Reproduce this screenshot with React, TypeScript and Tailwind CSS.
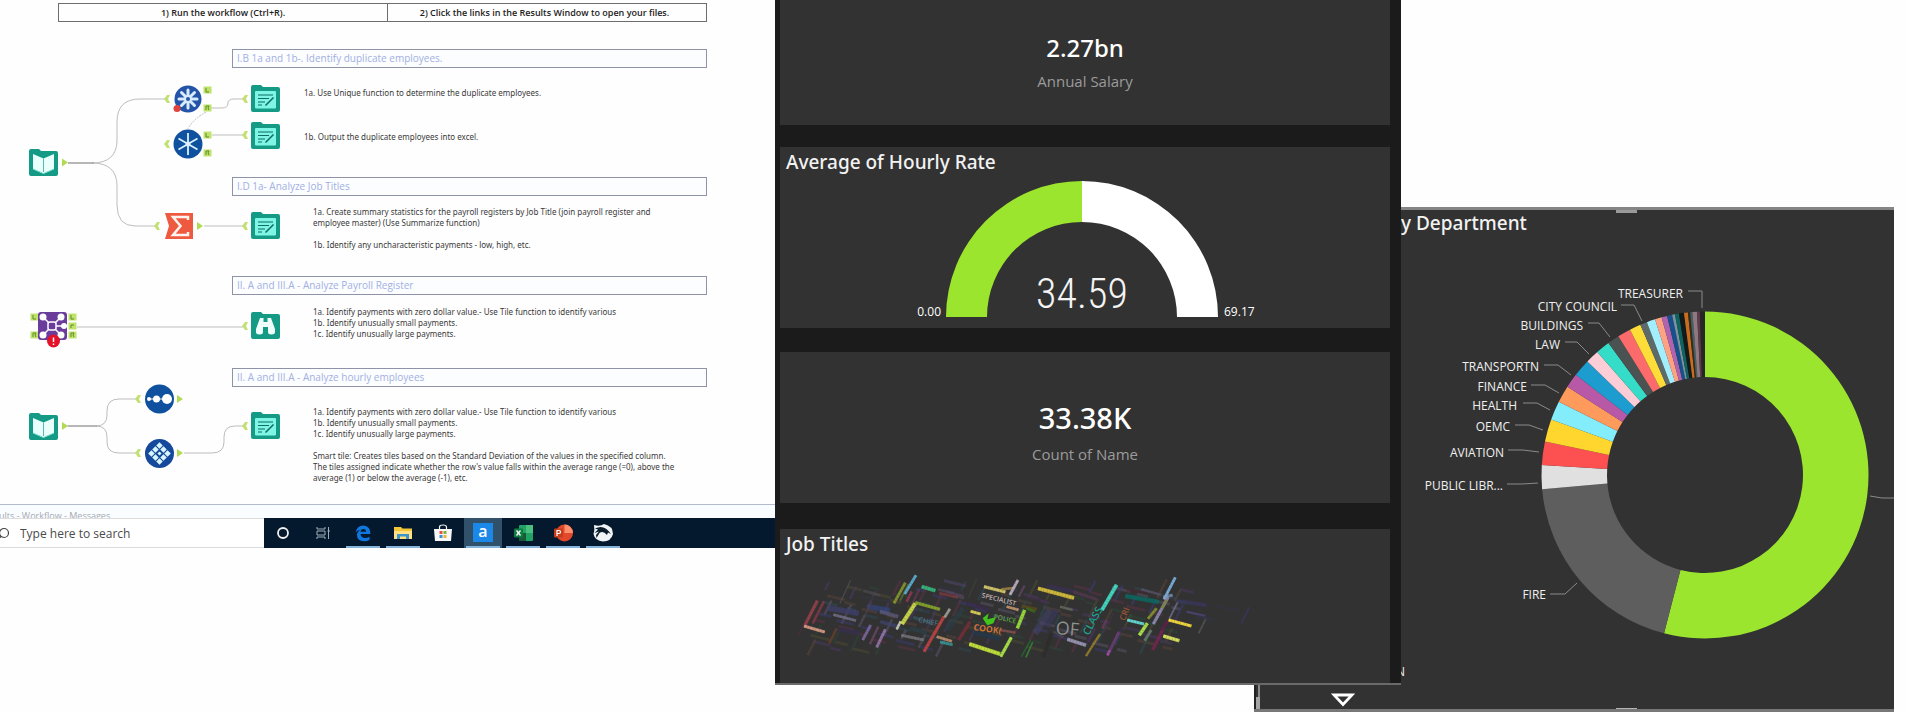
import React from "react";

const textFont = "font-['Open_Sans','Noto_Sans',sans-serif]";

/* ---------- Workflow canvas ---------- */

const TEAL = "#159a86";

function Folder({ x, y, children }: { x: number; y: number; children: React.ReactNode }) {
  return (
    <g transform={`translate(${x} ${y})`}>
      <path d="M0 2Q0 0 2 0H10L12 2H27Q29 2 29 4V25Q29 27 27 27H2Q0 27 0 25Z" fill={TEAL} />
      {children}
    </g>
  );
}

function Book({ x, y }: { x: number; y: number }) {
  return (
    <Folder x={x} y={y}>
      <path d="M4 5L14.500 9.500L25 5V20L14.500 24.500L4 20Z" fill="#e9fffb" />
      <path d="M14.500 9.500V23" stroke="#5fb5a9" strokeWidth="1" />
      <path d="M4 20L14.500 24.500L25 20" stroke="#7fe0d2" strokeWidth="1" fill="none" />
    </Folder>
  );
}

function Output({ x, y }: { x: number; y: number }) {
  return (
    <Folder x={x} y={y}>
      <rect x="4" y="6" width="21" height="17.500" rx="1" fill="#7ff5e6" />
      <path d="M7 10H22M7 13.500H18M7 17H14M7 20H11" stroke="#0f6d62" strokeWidth="1.200" />
      <path d="M14.500 20.500L22.500 12.500" stroke="#0f6d62" strokeWidth="1.600" />
    </Folder>
  );
}

function Browse({ x, y }: { x: number; y: number }) {
  return (
    <Folder x={x} y={y}>
      <path
        d="M9 6H12.500V10H16.500V6H20L24 17V20Q24 22.500 20.500 22.500Q17 22.500 17 20V15H12V20Q12 22.500 8.500 22.500Q5 22.500 5 20V17Z"
        fill="#effffc"
      />
    </Folder>
  );
}

function Port({ x, y, t }: { x: number; y: number; t?: string }) {
  return (
    <g>
      <rect x={x - 3.5} y={y - 3.5} width="8" height="7" fill="#bfe26a" />
      {t && <path d={t} transform={`translate(${x} ${y})`} stroke="#5f8a2c" strokeWidth="1" fill="none" />}
    </g>
  );
}

const InPort = ({ x, y }: { x: number; y: number }) => (
  <path d={`M${x + 2} ${y - 4}H${x - 1}L${x - 4} ${y}L${x - 1} ${y + 4}H${x + 2}L${x} ${y}Z`} fill="#c3e173" />
);
const OutPort = ({ x, y }: { x: number; y: number }) => (
  <path d={`M${x - 2} ${y - 4}L${x + 4} ${y}L${x - 2} ${y + 4}Z`} fill="#b0dc55" />
);

function Workflow() {
  return (
    <svg className="absolute left-0 top-0" width="775" height="470" viewBox="0 34 775 470" aria-hidden="true">
      <g fill="none" stroke="#bdbdbd" strokeWidth="1">
        <path d="M68 163H92Q117 163 117 140V122Q117 99 140 99H165" />
        <path d="M92 163Q117 163 117 186V205Q117 226 135 226H155" />
        <path d="M68 163H94" stroke="#909090" />
        <path d="M211 108H222Q228 108 228 103Q228 99 234 99H243" />
        <path d="M206 112Q192 120 188 129" strokeDasharray="2 1" />
        <path d="M212 135H243M204 226H243M77 327H243" />
        <path d="M67 426H96Q107 426 107 415V411Q107 399 119 399H137" />
        <path d="M96 426Q107 426 107 437V442Q107 453 119 453H137" />
        <path d="M68 426H97" stroke="#909090" />
        <path d="M184 453H212Q224 453 224 442V437Q224 426 235 426H243" />
      </g>

      <Book x={29} y={149} />
      <OutPort x={64} y={162.5} />

      <circle cx="188" cy="99" r="13.500" fill="#2454a8" />
      <g stroke="#d9ebff" strokeWidth="3" strokeLinecap="round">
        <path d="M188 90V108M179 99H197M181.500 92.500L194.500 105.500M194.500 92.500L181.500 105.500" />
      </g>
      <circle cx="188" cy="99" r="2" fill="#2454a8" />
      <circle cx="177" cy="108.500" r="3.500" fill="#e0443c" />
      <InPort x={168} y={99} />
      <Port x={207} y={90} t="M-1 -2V2H2" />
      <Port x={207} y={108} t="M-1 2V-2H2L1 0L2 2" />

      <circle cx="188" cy="144" r="14.500" fill="#0f519e" />
      <path d="M188 133V155M178.500 138.500L197.500 149.500M197.500 138.500L178.500 149.500" stroke="#d9f1ff" strokeWidth="1.800" />
      <circle cx="188" cy="144" r="2.500" fill="#d9f1ff" />
      <InPort x={168} y={144} />
      <Port x={207} y={135} t="M-1 -2V2H2" />
      <Port x={207} y={153} t="M-1 2V-2H2L1 0L2 2" />

      <InPort x={246} y={99} />
      <Output x={251} y={85} />
      <InPort x={246} y={135} />
      <Output x={251} y={122} />

      <InPort x={158} y={226} />
      <path d="M165 213H193V239H165L169 226Z" fill="#ee5a40" />
      <path d="M188 220V217H173L180.500 226L173 235H188V232" fill="none" stroke="#fff3ef" strokeWidth="2.500" />
      <OutPort x={199} y={226} />
      <InPort x={246} y={226} />
      <Output x={251} y={212} />

      <Port x={34} y={317} t="M-1 -2V2H2" />
      <Port x={34} y={335} t="M-1 2V-2H2L1 0L2 2" />
      <Port x={72} y={317} t="M-1 -2V2H2" />
      <Port x={72} y={326} t="M-1 2V-1H2" />
      <Port x={72} y={335} t="M-1 2V-2H2L1 0L2 2" />
      <rect x="38" y="312" width="29" height="28" rx="3" fill="#6a3d9c" />
      <path d="M43 317L61 335M61 317L43 335M52 326H65" stroke="#ffffff" strokeWidth="1.500" />
      <g fill="#ffffff">
        <circle cx="43" cy="317" r="3.500" />
        <circle cx="61" cy="317" r="3.500" />
        <circle cx="43" cy="335" r="3.500" />
        <circle cx="61" cy="335" r="3.500" />
        <circle cx="64" cy="326" r="3" />
      </g>
      <rect x="48" y="322" width="8" height="8" rx="2" fill="#6a3d9c" stroke="#ffffff" strokeWidth="1.500" />
      <circle cx="53.500" cy="341" r="6.500" fill="#e5122a" />
      <path d="M53.500 337.500V342M53.500 343.500V345" stroke="#ffffff" strokeWidth="1.500" />
      <InPort x={246} y={326} />
      <Browse x={251} y={312} />

      <Book x={29} y={413} />
      <OutPort x={64} y={426} />
      <InPort x={139} y={399} />
      <circle cx="159.500" cy="399" r="14.500" fill="#0f519e" />
      <path d="M148 399H168" stroke="#ffffff" strokeWidth="1" />
      <circle cx="149" cy="399" r="2" fill="#ffffff" />
      <circle cx="156.500" cy="399" r="3.500" fill="#ffffff" />
      <circle cx="167" cy="399" r="5" fill="#ffffff" />
      <OutPort x={179} y={399} />
      <InPort x={139} y={453} />
      <circle cx="159.500" cy="453.500" r="14.500" fill="#15499b" />
      <g transform="translate(159.500 453.500) rotate(45)" fill="#d8f6ff">
        <rect x="-8" y="-8" width="4.600" height="4.600" />
        <rect x="-2.300" y="-8" width="4.600" height="4.600" />
        <rect x="3.400" y="-8" width="4.600" height="4.600" />
        <rect x="-8" y="-2.300" width="4.600" height="4.600" />
        <rect x="-1.500" y="-1.500" width="3" height="3" />
        <rect x="3.400" y="-2.300" width="4.600" height="4.600" />
        <rect x="-8" y="3.400" width="4.600" height="4.600" />
        <rect x="-2.300" y="3.400" width="4.600" height="4.600" />
        <rect x="3.400" y="3.400" width="4.600" height="4.600" />
      </g>
      <OutPort x={179} y={453} />
      <InPort x={246} y={426} />
      <Output x={251} y={412} />
    </svg>
  );
}

const headingStyle =
  "absolute left-[232px] w-[475px] h-[19px] border border-[#8f93a8] bg-[#fbfdff] pl-1 text-[10px] leading-[17px] text-[#a3b0e2] whitespace-nowrap";
const noteStyle =
  "absolute font-['Noto_Sans','Open_Sans',sans-serif] text-[8px] leading-[11px] text-[#3a3a3a] whitespace-nowrap";

function Canvas() {
  return (
    <div className="relative h-[470px] overflow-hidden">
      <Workflow />
      <h2 className={`${headingStyle} top-[15px]`}>I.B 1a and 1b-. Identify duplicate employees.</h2>
      <p className={`${noteStyle} left-[304px] top-[53px]`}>1a. Use Unique function to determine the duplicate employees.</p>
      <p className={`${noteStyle} left-[304px] top-[97px]`}>1b. Output the duplicate employees into excel.</p>

      <h2 className={`${headingStyle} top-[143px]`}>I.D 1a- Analyze Job Titles</h2>
      <div className={`${noteStyle} left-[313px] top-[172px]`}>
        <p>1a. Create summary statistics for the payroll registers by Job Title (join payroll register and</p>
        <p>employee master) (Use Summarize function)</p>
        <p className="mt-[11px]">1b. Identify any uncharacteristic payments - low, high, etc.</p>
      </div>

      <h2 className={`${headingStyle} top-[242px]`}>II. A and III.A - Analyze Payroll Register</h2>
      <div className={`${noteStyle} left-[313px] top-[272px]`}>
        <p>1a. Identify payments with zero dollar value.- Use Tile function to identify various</p>
        <p>1b. Identify unusually small payments.</p>
        <p>1c. Identify unusually large payments.</p>
      </div>

      <h2 className={`${headingStyle} top-[334px]`}>II. A and III.A - Analyze hourly employees</h2>
      <div className={`${noteStyle} left-[313px] top-[372px]`}>
        <p>1a. Identify payments with zero dollar value.- Use Tile function to identify various</p>
        <p>1b. Identify unusually small payments.</p>
        <p>1c. Identify unusually large payments.</p>
        <p className="mt-[11px]">Smart tile: Creates tiles based on the Standard Deviation of the values in the specified column.</p>
        <p>The tiles assigned indicate whether the row's value falls within the average range (=0), above the</p>
        <p>average (1) or below the average (-1), etc.</p>
      </div>
    </div>
  );
}

function TaskButton({ label, open, active, children }: { label: string; open?: boolean; active?: boolean; children: React.ReactNode }) {
  return (
    <button
      aria-label={label}
      className={`relative flex h-[30px] w-[38px] items-center justify-center ${active ? "bg-[#31506a]" : ""}`}
    >
      <svg width="22" height="22" viewBox="0 0 22 22">
        {children}
      </svg>
      {open && <span className="absolute inset-x-[2px] bottom-0 h-[2px] bg-[#84b4dc]" />}
    </button>
  );
}

function Taskbar() {
  return (
    <div className="flex h-[30px] bg-[#04192d]">
      <label className="flex w-[264px] items-center gap-[11px] overflow-hidden border-y border-[#dcdcdc] bg-white pt-[2px]">
        <svg width="9" height="14" viewBox="0 0 9 14" className="shrink-0" aria-hidden="true">
          <circle cx="4" cy="6" r="4.500" fill="none" stroke="#444" strokeWidth="1.200" />
          <path d="M1 9.500L-2 12.500" stroke="#444" strokeWidth="1.200" />
        </svg>
        <input
          aria-label="Search"
          placeholder="Type here to search"
          className="w-full bg-transparent text-[12px] leading-4 text-[#444] outline-none placeholder:text-[#4a4a4a]"
        />
      </label>
      <div className="flex items-center gap-[2px]">
        <TaskButton label="Cortana">
          <circle cx="11" cy="11" r="5" fill="none" stroke="#f1f1f1" strokeWidth="1.800" />
        </TaskButton>
        <TaskButton label="Task view">
          <path d="M5 5V7H13V5M5 17V15H13V17M5 9H13V13H5ZM16.500 5V17M15.500 9H18" fill="none" stroke="#9fb0bb" strokeWidth="1" />
        </TaskButton>
        <TaskButton label="Edge" open>
          <path
            d="M3.500 10.500Q5 3.500 11.500 3.500Q18.500 4 18.500 12H8.500Q9 16 13 16Q15.500 16 17.500 14.800V18Q15 19.200 12 19.200Q5 19 5 13Q5 9.500 9 7.500Q5.500 8 3.500 10.500ZM8.500 9.800H14Q14 7 11.500 7Q9 7 8.500 9.800Z"
            fill="#0f78e0"
            fillRule="evenodd"
          />
        </TaskButton>
        <TaskButton label="Files" open>
          <path d="M2 5H9L10.500 6.500H20V17H2Z" fill="#f3c63a" />
          <path d="M2 9H20V17H2Z" fill="#ffe082" />
          <path d="M5 12H17V17H14V14.500H8V17H5Z" fill="#3c96c9" />
        </TaskButton>
        <TaskButton label="Store">
          <path d="M7.500 7V5Q7.500 3 11 3Q14.500 3 14.500 5V7" fill="none" stroke="#f4f4f4" strokeWidth="1.200" />
          <path d="M2 7H20L19 19H3Z" fill="#f8f8f8" />
          <rect x="7.500" y="9" width="3" height="3" fill="#e2543c" />
          <rect x="11.500" y="9" width="3" height="3" fill="#7cb342" />
          <rect x="7.500" y="13" width="3" height="3" fill="#3b8fd6" />
          <rect x="11.500" y="13" width="3" height="3" fill="#f2b632" />
        </TaskButton>
        <TaskButton label="Alteryx" open active>
          <rect x="1" y="1" width="20" height="19" fill="#1b87e6" />
          <text x="11" y="15" textAnchor="middle" fontSize="16" fontWeight="600" fill="#ffffff" fontFamily="Open Sans">a</text>
        </TaskButton>
        <TaskButton label="Excel" open>
          <rect x="7" y="3" width="14" height="16" rx="1" fill="#21a366" />
          <path d="M14 3H21V11H14Z" fill="#4bbf7e" />
          <path d="M7 11H14V19H7Z" fill="#185c37" />
          <rect x="2" y="6.500" width="9" height="9" rx="1" fill="#107c41" />
          <path d="M4.500 8.500L8.500 13.500M8.500 8.500L4.500 13.500" stroke="#ffffff" strokeWidth="1.300" />
        </TaskButton>
        <TaskButton label="PowerPoint" open>
          <circle cx="12.500" cy="11" r="8.500" fill="#e2492c" />
          <path d="M12.500 2.500A8.500 8.500 0 0 1 21 11H12.500Z" fill="#ff8f6b" />
          <rect x="2" y="6.500" width="9" height="9" rx="1" fill="#c43e1c" />
          <path d="M5 14V8.500H7Q8.500 8.500 8.500 10Q8.500 11.500 7 11.500H5" fill="none" stroke="#ffffff" strokeWidth="1.200" />
        </TaskButton>
        <TaskButton label="Idea" open>
          <path d="M2 3Q8 5 12 2Q21 4 21 12Q19 19.500 11 19.500Q3 19 1.500 12Q3 8 2 3Z" fill="#f2f5f7" />
          <path d="M3 6.500Q12 1.500 19 12L16 10.500L15 13Q11 8 7.500 11L4.500 16L4 13L7 9.500L2.500 11L6 7.500Z" fill="#0b1c2c" />
        </TaskButton>
      </div>
    </div>
  );
}

function Designer() {
  return (
    <section className="min-w-0 overflow-hidden">
      <div className="mt-[3px] mr-[68px] mb-3 ml-[58px] flex h-[19px] border border-[#6e6e6e] text-center text-[9px] leading-[17px] font-semibold whitespace-nowrap text-[#222]">
        <p className="w-[329px] border-r border-[#6e6e6e]">1) Run the workflow (Ctrl+R).</p>
        <p className="flex-1 pr-[5px]">2) Click the links in the Results Window to open your files.</p>
      </div>
      <Canvas />
      <div className="h-[14px] overflow-hidden border-t border-[#b4bccb] bg-[#fafdff]">
        <p className="mt-[4px] -ml-[1px] text-[9px] leading-[14px] whitespace-nowrap text-[#a5a9b2]">ults - Workflow - Messages</p>
      </div>
      <Taskbar />
    </section>
  );
}

/* ---------- Dashboard column ---------- */

function Gauge() {
  return (
    <svg className="mx-auto block" width="360" height="144" viewBox="905 177 360 144" role="img" aria-label="Average of Hourly Rate">
      <path d="M946 317A136 136 0 0 1 1082 181V222A95 95 0 0 0 987 317Z" fill="#9be52e" />
      <path d="M1082 181A136 136 0 0 1 1218 317H1177A95 95 0 0 0 1082 222Z" fill="#ffffff" />
      <g fill="#ffffff" fontFamily="Open Sans, Noto Sans, sans-serif" fontSize="12" fontWeight="500">
        <text x="941" y="316" textAnchor="end">0.00</text>
        <text x="1224" y="316">69.17</text>
      </g>
      <text
        x="1082"
        y="308"
        textAnchor="middle"
        fontSize="42"
        fontWeight="300"
        fill="#f4f4f4"
        fontFamily="Roboto Condensed, Open Sans Condensed, Roboto, sans-serif"
      >
        34.59
      </text>
    </svg>
  );
}

// [x1, y1, x2, y2, colour, thickness, opacity]
type Stroke = [number, number, number, number, string, number, number];

const strokes: Stroke[] = [
  [180, 130, 212, 60, "#55545c", 4, 0.7],
  [75, 195, 112, 122, "#a8434f", 10, 0.8],
  [98, 190, 132, 124, "#8a3a4a", 8, 0.8],
  [56, 225, 72, 190, "#5c2c48", 5, 0.5],
  [72, 198, 134, 216, "#e0a088", 10, 0.9],
  [144, 144, 236, 160, "#40406e", 18, 0.8],
  [160, 164, 228, 182, "#7a7592", 9, 0.8],
  [148, 250, 170, 205, "#7c442c", 8, 0.6],
  [175, 208, 240, 220, "#36304f", 14, 0.8],
  [250, 92, 300, 106, "#4d4d50", 9, 0.7],
  [240, 110, 330, 125, "#35363c", 10, 0.8],
  [262, 140, 330, 152, "#344a92", 18, 0.6],
  [300, 155, 355, 170, "#646088", 12, 0.7],
  [250, 175, 275, 125, "#54404a", 6, 0.6],
  [248, 240, 272, 195, "#8a70b0", 9, 0.8],
  [270, 252, 295, 200, "#6d4866", 8, 0.8],
  [290, 262, 316, 208, "#9a78ae", 9, 0.9],
  [300, 185, 350, 200, "#42426c", 12, 0.7],
  [342, 130, 376, 68, "#8c9a2e", 9, 0.9],
  [360, 122, 386, 72, "#627034", 6, 0.8],
  [374, 102, 408, 46, "#58a8cc", 9, 1],
  [380, 125, 395, 95, "#b03a5a", 8, 0.7],
  [395, 135, 418, 88, "#6d3a5c", 7, 0.7],
  [425, 80, 466, 92, "#36bd80", 12, 0.9],
  [350, 208, 362, 184, "#d8d8c4", 8, 0.9],
  [366, 192, 406, 130, "#d8e64a", 13, 0.9],
  [406, 128, 480, 148, "#8cab2c", 10, 0.9],
  [404, 146, 450, 158, "#30404c", 12, 0.7],
  [400, 172, 460, 190, "#395b66", 10, 0.7],
  [364, 226, 432, 240, "#7c7c82", 9, 0.8],
  [390, 205, 440, 218, "#2c4148", 14, 0.8],
  [492, 62, 558, 78, "#48425c", 10, 0.8],
  [480, 80, 548, 98, "#34333e", 12, 0.8],
  [478, 100, 534, 112, "#8c3a44", 9, 0.7],
  [500, 95, 550, 108, "#5a4560", 7, 0.7],
  [432, 275, 492, 170, "#bd4444", 10, 0.95],
  [494, 172, 510, 146, "#a4a498", 9, 0.9],
  [470, 230, 516, 244, "#c09070", 9, 0.9],
  [480, 246, 518, 254, "#38a0a0", 9, 0.8],
  [500, 210, 550, 145, "#2c3f48", 16, 0.7],
  [536, 240, 570, 185, "#8a2c3c", 11, 0.7],
  [566, 112, 590, 55, "#3e4434", 5, 0.7],
  [560, 130, 630, 150, "#3c2c50", 12, 0.7],
  [612, 80, 676, 96, "#d5cb6e", 10, 0.95],
  [664, 88, 700, 84, "#b89a3c", 8, 0.7],
  [690, 104, 714, 60, "#c4b8c8", 9, 0.9],
  [716, 110, 734, 76, "#6a4870", 7, 0.7],
  [572, 154, 602, 162, "#e8dc58", 9, 0.9],
  [680, 140, 716, 150, "#c89870", 9, 0.9],
  [580, 218, 660, 236, "#23394c", 15, 0.8],
  [660, 210, 706, 218, "#8c5450", 8, 0.8],
  [568, 252, 660, 282, "#bfe03c", 12, 1],
  [662, 290, 694, 232, "#a6e046", 10, 1],
  [712, 205, 734, 150, "#96d838", 11, 1],
  [725, 138, 770, 148, "#5b4a1c", 11, 0.8],
  [740, 145, 765, 155, "#387018", 9, 0.8],
  [724, 290, 752, 240, "#286c30", 5, 0.8],
  [738, 292, 758, 246, "#369034", 5, 0.8],
  [740, 110, 800, 125, "#463050", 10, 0.5],
  [774, 85, 882, 114, "#d0b83c", 12, 1],
  [800, 78, 880, 94, "#3c305a", 12, 0.7],
  [880, 95, 950, 118, "#603a5a", 10, 0.6],
  [840, 140, 878, 150, "#687060", 8, 0.8],
  [765, 220, 810, 150, "#44446c", 22, 0.6],
  [800, 200, 830, 150, "#39395c", 20, 0.7],
  [790, 290, 815, 220, "#302a2a", 12, 0.7],
  [862, 238, 918, 256, "#a09cb8", 11, 0.9],
  [820, 215, 850, 232, "#4c4c58", 8, 0.7],
  [918, 288, 960, 222, "#9a802c", 7, 0.9],
  [966, 205, 980, 180, "#703e5e", 8, 0.7],
  [982, 286, 1018, 216, "#a450a8", 9, 0.9],
  [966, 150, 1010, 74, "#42d6c0", 12, 1],
  [925, 245, 945, 205, "#513264", 9, 0.7],
  [970, 220, 1000, 160, "#4c304c", 6, 0.6],
  [990, 270, 1030, 200, "#3a314c", 10, 0.6],
  [1036, 108, 1136, 126, "#0b6a62", 14, 0.9],
  [1040, 90, 1100, 98, "#4b2636", 10, 0.5],
  [1084, 88, 1142, 104, "#5a5468", 8, 0.8],
  [1042, 180, 1092, 192, "#62d2cc", 10, 1],
  [1152, 118, 1186, 52, "#78acd4", 9, 1],
  [1120, 192, 1164, 112, "#9290b8", 10, 0.9],
  [1150, 112, 1178, 105, "#8aa0c8", 10, 0.7],
  [1104, 176, 1130, 145, "#8a9430", 9, 0.9],
  [1078, 226, 1102, 190, "#a8e04c", 11, 1],
  [1094, 242, 1114, 210, "#6c8874", 9, 0.8],
  [1118, 270, 1148, 210, "#7c2456", 11, 0.8],
  [1145, 210, 1165, 180, "#6c1c50", 9, 0.8],
  [1146, 145, 1160, 120, "#7c802c", 8, 0.8],
  [1168, 176, 1194, 125, "#747094", 6, 0.8],
  [1166, 180, 1234, 198, "#ecd83c", 10, 1],
  [1150, 228, 1198, 242, "#d8e060", 11, 1],
  [1190, 122, 1280, 136, "#3c3864", 12, 0.7],
  [1220, 155, 1276, 168, "#50487c", 7, 0.8],
  [1256, 220, 1278, 175, "#5c5c60", 6, 0.7],
  [1250, 170, 1300, 178, "#34344c", 10, 0.6],
  [1310, 138, 1380, 152, "#353448", 8, 0.5],
  [1384, 190, 1408, 142, "#3c3860", 7, 0.7],
];

// Small, faint words that fill the gaps between the readable ones.
const fillerColours = ["#4a3a62", "#5c3346", "#2f4a52", "#4d4a34", "#3c3c70", "#58443a", "#2d4638", "#5a5468"];

const fillers: Stroke[] = Array.from({ length: 170 }, (_, i) => {
  const row = i % 10;
  const col = Math.floor(i / 10);
  const x = 135 + col * 66 - row * 7 + ((i * 37) % 23);
  const y = 78 + row * 20 + ((i * 53) % 11);
  const len = 24 + ((i * 29) % 34);
  const colour = fillerColours[(i * 5 + col) % fillerColours.length];
  const steep = (i * 7 + col) % 3 === 0;
  return steep
    ? [x, y + len / 2, x + len * 0.5, y - len / 2, colour, 8, 0.6]
    : [x, y, x + len, y + len * 0.24, colour, 9, 0.55];
});

function WordCloud() {
  return (
    <svg className="block" width="510" height="120" viewBox="0 0 1530 360" role="img" aria-label="Job Titles">
      {[...fillers, ...strokes].map(([x1, y1, x2, y2, colour, w, o], i) => (
        <g key={i} stroke={colour} opacity={o}>
          <path d={`M${x1} ${y1}L${x2} ${y2}`} strokeWidth={w} opacity="0.75" />
          <path d={`M${x1} ${y1}L${x2} ${y2}`} strokeWidth={w * 0.7} strokeDasharray="9 2 6 2" />
        </g>
      ))}
      <path d="M608 175L626 160L622 178L648 172L640 190L622 196Z" fill="#44c41c" />
      <g fontFamily="Open Sans, Noto Sans, sans-serif">
        <text x="604" y="112" fontSize="20" fontWeight="600" fill="#c8b8b8" transform="rotate(14 604 112)">SPECIALIST</text>
        <text x="640" y="176" fontSize="20" fontWeight="600" fill="#5aa838" transform="rotate(12 640 176)">POLICE</text>
        <text x="580" y="210" fontSize="26" fontWeight="700" fill="#cf7438" transform="rotate(8 580 210)">COOK(</text>
        <text x="414" y="186" fontSize="22" fill="#5b7488" transform="rotate(12 414 186)">CHIEF</text>
        <text x="826" y="222" fontSize="54" fill="#8d9190" transform="rotate(5 826 222)">OF</text>
        <text x="926" y="228" fontSize="31" fontWeight="600" fill="#1fa18c" transform="rotate(-62 926 228)">CLASS</text>
        <text x="1034" y="184" fontSize="26" fontWeight="600" fill="#9c5534" transform="rotate(-68 1034 184)">CRI</text>
      </g>
    </svg>
  );
}

const statFont = "font-['Noto_Sans','Open_Sans',sans-serif]";

function Stats() {
  return (
    <section className="relative z-10 h-[685px] min-w-0 overflow-hidden border-b-2 border-[#6a6a6a] bg-[#1b1b1b] pr-[11px] pl-[5px]">
      <article className="h-[125px] bg-[#323232] pt-[31px] text-center">
        <p className={`${statFont} text-[24px] leading-[34px] font-medium text-white`}>2.27bn</p>
        <p className="mt-[6px] text-[15px] leading-5 text-[#9b9b9b]">Annual Salary</p>
      </article>
      <article className="mt-[22px] h-[181px] bg-[#323232]">
        <h2 className={`${statFont} h-[30px] pt-[3px] pl-[6px] text-[19px] leading-6 font-medium text-[#f2f2f2]`}>Average of Hourly Rate</h2>
        <Gauge />
      </article>
      <article className="mt-[24px] h-[151px] bg-[#323232] pt-[46px] text-center">
        <p className={`${statFont} text-[29px] leading-[40px] font-medium text-white`}>33.38K</p>
        <p className="mt-[6px] text-[15px] leading-5 text-[#9b9b9b]">Count of Name</p>
      </article>
      <article className="mt-[26px] h-[154px] bg-[#323232]">
        <h2 className={`${statFont} h-[31px] pt-[3px] pl-[6px] text-[19px] leading-6 font-medium text-[#f2f2f2]`}>Job Titles</h2>
        <WordCloud />
      </article>
    </section>
  );
}

/* ---------- Department donut ---------- */

const CX = 1705;
const CY = 475;

// [end angle in degrees clockwise from the top, colour]
const slices: [number, string][] = [
  [194.5, "#9be52e"],
  [265, "#5e5e5e"],
  [273.5, "#e0e0e0"],
  [281.8, "#fd5050"],
  [289.8, "#fed62e"],
  [296.6, "#84edfb"],
  [302.7, "#fe9a5c"],
  [307.8, "#b859a8"],
  [314, "#1c9ccf"],
  [318.8, "#fbcdd6"],
  [323.8, "#35dcc8"],
  [328, "#4a5252"],
  [332.7, "#fc6b6b"],
  [336.7, "#fedd38"],
  [339.2, "#5d6a6a"],
  [342.2, "#a2eefc"],
  [344.6, "#fda383"],
  [346.6, "#b163ae"],
  [348.4, "#17508c"],
  [349.4, "#7b93a0"],
  [350.8, "#0d6460"],
  [352.6, "#121a1a"],
  [354, "#c86c22"],
  [354.8, "#3a2a10"],
  [355.6, "#40606c"],
  [357.2, "#90787f"],
  [358.2, "#5c3a4a"],
  [360, "#262626"],
];

function arc(a0: number, a1: number) {
  const p = (r: number, a: number) => {
    const t = (a * Math.PI) / 180;
    return `${(CX + r * Math.sin(t)).toFixed(2)} ${(CY - r * Math.cos(t)).toFixed(2)}`;
  };
  const big = a1 - a0 > 180 ? 1 : 0;
  return `M${p(163.5, a0)}A163.500 163.500 0 ${big} 1 ${p(163.5, a1)}L${p(98, a1)}A98 98 0 ${big} 0 ${p(98, a0)}Z`;
}

const labels: { text: string; x: number; y: number; line: string }[] = [
  { text: "TREASURER", x: 1683, y: 298, line: "M1688 291H1702V308" },
  { text: "CITY COUNCIL", x: 1617, y: 311, line: "M1621 305H1634L1642 321" },
  { text: "BUILDINGS", x: 1583, y: 330, line: "M1588 323H1599L1610 337" },
  { text: "LAW", x: 1560, y: 349, line: "M1565 342H1577L1589 354" },
  { text: "TRANSPORTN", x: 1539, y: 371, line: "M1544 365H1558L1571 375" },
  { text: "FINANCE", x: 1527, y: 391, line: "M1531 385H1545L1559 393" },
  { text: "HEALTH", x: 1517, y: 410, line: "M1523 403H1537L1550 410" },
  { text: "OEMC", x: 1510, y: 431, line: "M1515 425H1529L1543 430" },
  { text: "AVIATION", x: 1504, y: 457, line: "M1508 450H1523L1539 452" },
  { text: "PUBLIC LIBR...", x: 1503, y: 490, line: "M1507 484H1522L1538 483" },
  { text: "FIRE", x: 1546, y: 599, line: "M1550 594H1565L1577 583" },
];

function Department() {
  return (
    <section className="relative mt-[207px] mr-3 -ml-[147px] h-[505px] overflow-hidden border-y-[3px] border-t-[#858585] border-b-[#777] bg-[#323232]">
      <span className="absolute top-0 left-[362px] h-[3px] w-[21px] bg-[#9a9a9a]" />
      <h2 className={`${statFont} h-[34px] pt-px pl-[147px] text-[19px] leading-6 font-medium text-[#f2f2f2]`}>y Department</h2>
      <svg className="block" width="640" height="450" viewBox="1254 244 640 450" role="img" aria-label="Salary by department">
        {slices.map(([end, colour], i) => (
          <path key={i} d={arc(i === 0 ? 0 : slices[i - 1][0], end)} fill={colour} />
        ))}
        <g fill="none" stroke="#8a8a8a" strokeWidth="1">
          {labels.map((l) => (
            <path key={l.text} d={l.line} />
          ))}
          <path d="M1870 496L1882 498H1894" />
        </g>
        <g fill="#f0f0f0" textAnchor="end" fontSize="12" fontWeight="500" fontFamily="Open Sans, Noto Sans, sans-serif">
          {labels.map((l) => (
            <text key={l.text} x={l.x} y={l.y}>
              {l.text}
            </text>
          ))}
          <text x="1405" y="676">N</text>
        </g>
      </svg>
      <button aria-label="Next" className="absolute bottom-[2px] left-[77px]">
        <svg width="24" height="14" viewBox="0 0 24 14">
          <path d="M3 2H21L12 11.500Z" fill="none" stroke="#ffffff" strokeWidth="2.800" />
        </svg>
      </button>
      <span className="absolute bottom-0 left-0 h-[26px] w-[6px] border-r-2 border-l-2 border-[#222] border-r-[#8a8a8a]" />
      <span className="absolute bottom-0 left-[2px] h-[12px] w-[4px] bg-[#a5a5a5]" />
      <span className="absolute bottom-0 left-[362px] h-[1px] w-[21px] bg-[#b5b5b5]" />
    </section>
  );
}

export default function App() {
  return (
    <main className={`grid grid-cols-[775fr_626fr_505fr] items-start overflow-hidden bg-[#fefefe] ${textFont}`}>
      <Designer />
      <Stats />
      <Department />
    </main>
  );
}
